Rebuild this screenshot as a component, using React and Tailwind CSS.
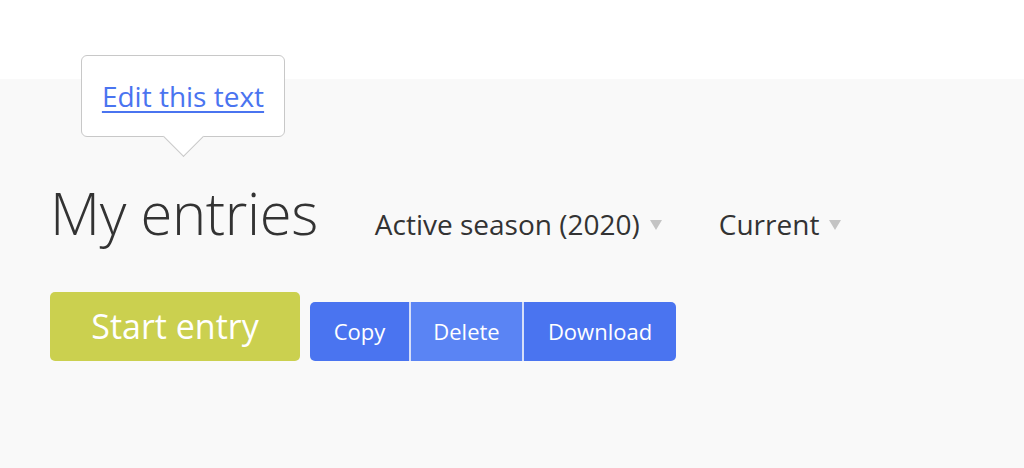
export default function App() {
  const font = { fontFamily: '"Open Sans", "Noto Sans", sans-serif' };
  return (
    <div className="w-[1024px] h-[468px] bg-[#f9f9f9] flex flex-col overflow-hidden" style={font}>
      <div className="h-[79px] bg-white shrink-0 relative">
        <div className="absolute left-[81px] top-[55px] z-10">
          <div className="relative w-[204px] h-[82px] bg-white border border-[#c8c8c8] rounded-[6px] flex items-center justify-center">
            <div className="absolute left-[87px] bottom-[-15px] w-[29px] h-[29px] bg-white border-r border-b border-[#c8c8c8] rotate-45"></div>
            <a href="#" className="relative text-[28px] text-[#4a74f0] underline underline-offset-[4px] decoration-[1.5px] leading-none pb-[1px]">Edit this text</a>
          </div>
        </div>
      </div>
      <div className="pl-[50px] pt-[96px] flex flex-col">
        <div className="flex items-baseline h-[76px]">
          <h1 className="text-[58px] font-light text-[#333] leading-[76px] tracking-[-0.4px]">My entries</h1>
          <button className="ml-[57px] flex items-baseline text-[28px] text-[#333]">
            Active season (2020)
            <span className="ml-[10px] self-center mt-[2px] w-0 h-0 border-l-[6px] border-r-[6px] border-t-[10px] border-l-transparent border-r-transparent border-t-[#c4c4c4]"></span>
          </button>
          <button className="ml-[57px] flex items-baseline text-[28px] text-[#333]">
            Current
            <span className="ml-[10px] self-center mt-[2px] w-0 h-0 border-l-[6px] border-r-[6px] border-t-[10px] border-l-transparent border-r-transparent border-t-[#c4c4c4]"></span>
          </button>
        </div>
        <div className="flex items-end mt-[41px] gap-[10px]">
          <button className="w-[250px] h-[69px] bg-[#cbd04f] rounded-[5px] text-white text-[34px] flex items-center justify-center pb-[1px]">Start entry</button>
          <div className="flex h-[59px] rounded-[5px] overflow-hidden bg-[#4a74f0] text-white text-[22px]">
            <button className="w-[101px] flex items-center justify-center border-r-2 border-[#d6def8]">Copy</button>
            <button className="w-[113px] flex items-center justify-center bg-[#5a84f4] border-r-2 border-[#d6def8]">Delete</button>
            <button className="w-[152px] flex items-center justify-center">Download</button>
          </div>
        </div>
      </div>
    </div>
  );
}
